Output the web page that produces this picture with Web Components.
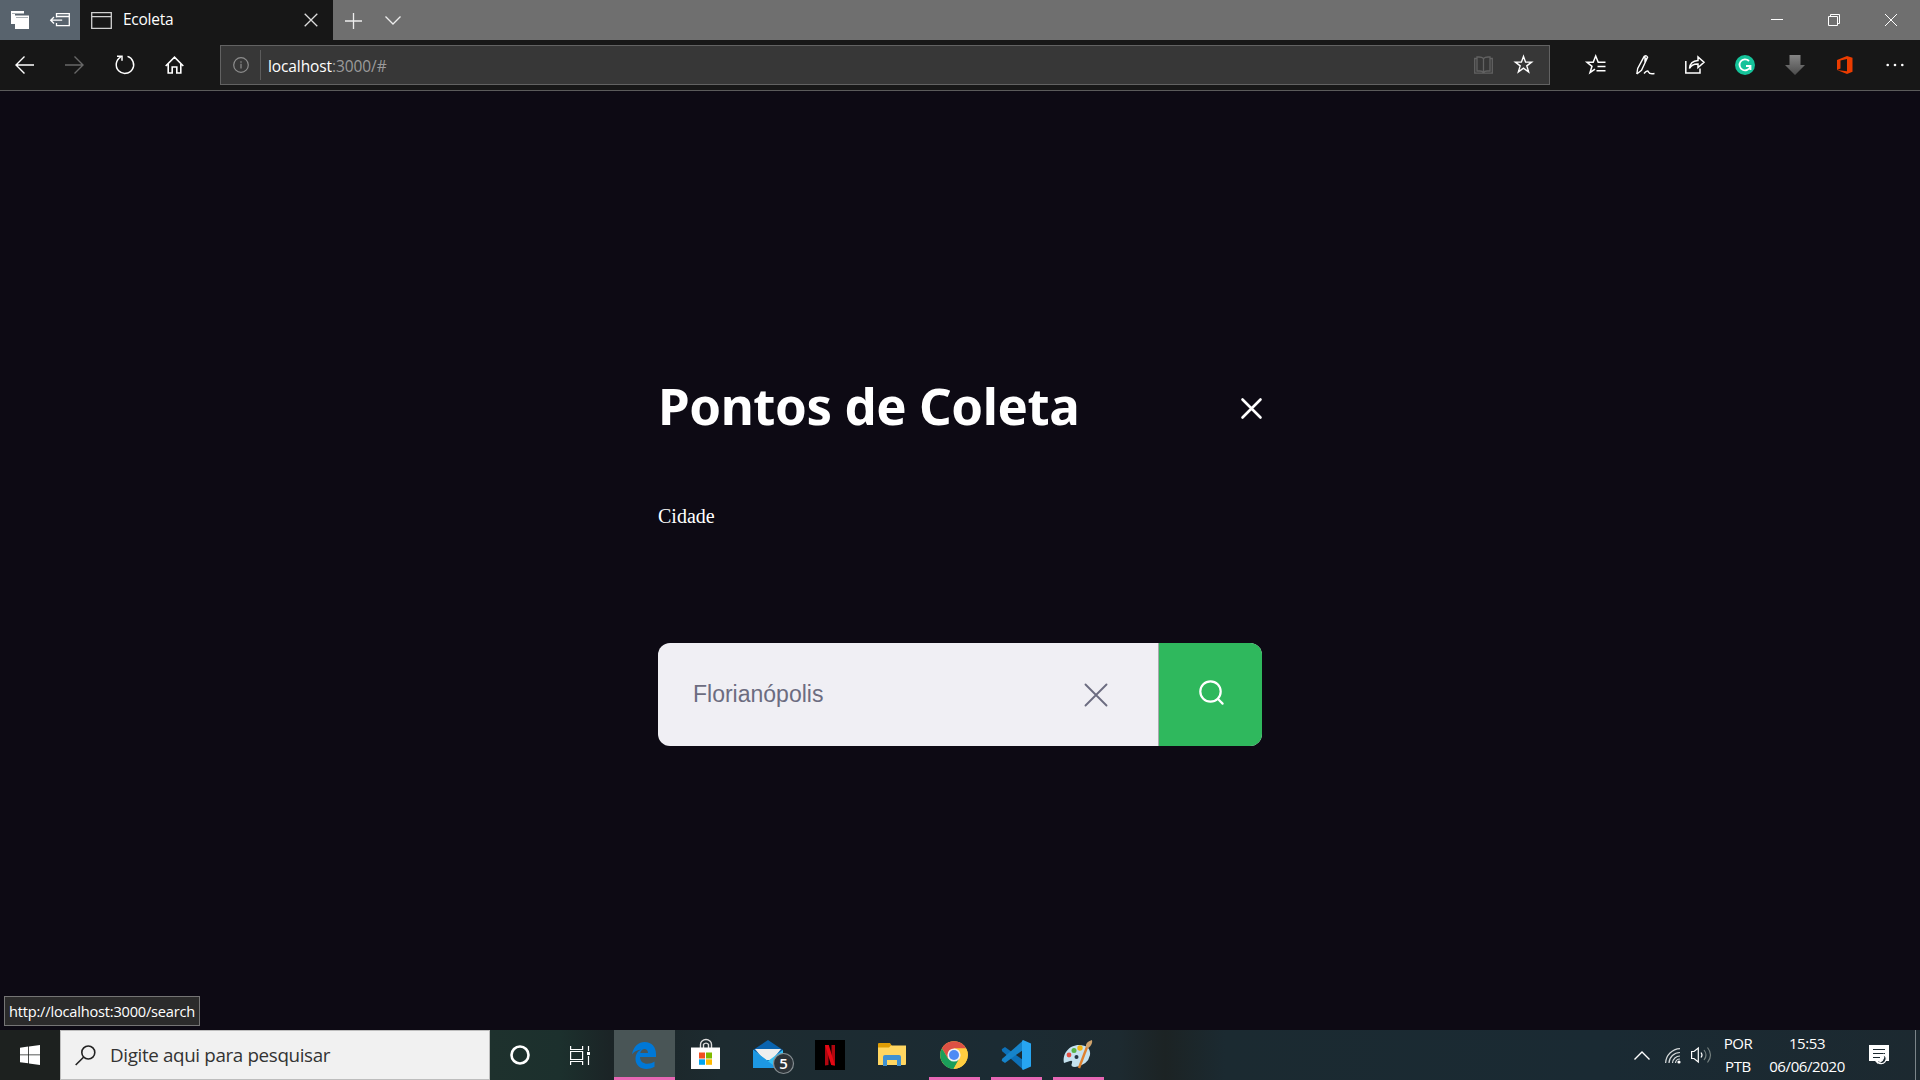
<!DOCTYPE html>
<html lang="pt-BR">
<head>
<meta charset="utf-8">
<title>Ecoleta</title>
<style>
html,body{margin:0;height:100%;background:#0d0a14;overflow:hidden}
</style>
</head>
<body>
<eco-desktop></eco-desktop>
<script>
const define = (name, css, html) => customElements.define(name, class extends HTMLElement {
  constructor() {
    super();
    this.attachShadow({mode: 'open'}).innerHTML = `<style>*{box-sizing:border-box}svg{display:block;overflow:visible}${css}</style>${html}`;
  }
});

/* fixed-width cell that centres an icon */
customElements.define('icon-cell', class extends HTMLElement {
  constructor() {
    super();
    this.attachShadow({mode: 'open'}).innerHTML = `<style>:host{display:flex;align-items:center;justify-content:center;flex:none;height:100%;width:var(--w,50px)}</style><slot></slot>`;
  }
  connectedCallback() {
    if (this.hasAttribute('w')) this.style.setProperty('--w', this.getAttribute('w') + 'px');
  }
});

define('tab-strip', `
:host{display:flex;height:40px;background:#6f6f6f;color:#fff;font:16px "Open Sans",sans-serif}
.aside{display:flex;width:80px;background:#58636d}
.tab{display:flex;align-items:center;width:253px;background:#171717}
.tab svg:first-child{margin-left:11px}
.tab span{margin-left:11px;flex:1;letter-spacing:-.25px;font-size:15.5px;line-height:39px;height:40px}
.tab svg:last-child{margin-right:15px}
.gap{flex:1}
`, `
<div class="aside">
 <icon-cell w="40"><svg width="18" height="18" viewBox="0 0 18 18"><path d="M0 0h13v3H3v10H0z" fill="#fff"/><path d="M0 3h4v10H0z" fill="#fff"/><path d="M4 4.500h14V18H4z" fill="#fff"/><path d="M1 2.500h12M5 6.500h12" stroke="#a9b0b5"/></svg></icon-cell>
 <icon-cell w="40"><svg width="20" height="14" viewBox="0 0 20 14" fill="none" stroke="#fff" stroke-width="1.300"><path d="M6.500 4.500V.7h12.800v12H6.500V10M6.500 3.500h13M.7 7.200h11.500M4 4L.7 7.200 4 10.500"/></svg></icon-cell>
</div>
<div class="tab">
 <svg width="21" height="17" viewBox="0 0 21 17" fill="none" stroke="#d0d0d0" stroke-width="1.300"><path d="M.7.700h19.600v15.600H.7zM.7 4.600h19.600"/></svg>
 <span>Ecoleta</span>
 <svg width="14" height="14" viewBox="0 0 14 14" stroke="#ddd" stroke-width="1.300"><path d="M.7.700l12.600 12.600M13.300.700L.7 13.300"/></svg>
</div>
<icon-cell w="41"><svg width="17" height="17" viewBox="0 0 17 17" stroke="#eee" stroke-width="1.300"><path d="M8.500 1v16M0 9h17"/></svg></icon-cell>
<icon-cell w="37"><svg width="16" height="9" viewBox="0 0 16 9" fill="none" stroke="#eee" stroke-width="1.300"><path d="M.5.500L8 8 15.500.500"/></svg></icon-cell>
<div class="gap"></div>
<icon-cell w="57"><svg width="12" height="2"><path d="M0 .500h12" stroke="#fff"/></svg></icon-cell>
<icon-cell w="57"><svg width="12" height="12" viewBox="0 0 12 12" fill="none" stroke="#fff"><path d="M.5 2.500h9v9h-9zM2.500 2.500v-2h9v9h-2"/></svg></icon-cell>
<icon-cell w="57"><svg width="12" height="12" viewBox="0 0 12 12" stroke="#fff"><path d="M0 0l12 12M12 0L0 12"/></svg></icon-cell>
<icon-cell w="1"></icon-cell>
`);

define('address-bar', `
:host{display:flex;align-items:center;width:1330px;height:40px;border:1px solid #626262;background:#373737;font:16px "Open Sans",sans-serif;color:#9b9b9b}
b{font-weight:400;color:#fff}
.rule{width:1px;height:30px;background:#5c5c5c}
span{flex:1;margin-left:7px;padding-top:2px;font-size:15.500px;letter-spacing:-.1px}
`, `
<icon-cell w="39"><svg width="16" height="16" viewBox="0 0 16 16" fill="none" stroke="#8d8d8d" stroke-width="1.200"><circle cx="8" cy="8" r="7.300"/><path d="M8 6.800v4.700M8 4.300v1.400"/></svg></icon-cell>
<div class="rule"></div><span><b>localhost</b>:3000/#</span>
<icon-cell w="40"><svg width="19" height="18" viewBox="0 0 19 18" fill="none" stroke="#626262" stroke-width="1.300"><path d="M9.500 2.500Q8 1 5 1H3v14h3q2.500 0 3.500 1.500Q10.500 15 13 15h3V1h-2q-3 0-4.500 1.500zV16M3 2.500H.7v14.700h17.600V2.500H16"/></svg></icon-cell>
<icon-cell w="40"><svg width="19" height="19" viewBox="0 0 20 20" fill="none" stroke="#fff" stroke-width="1.500"><path d="M10 1.500l2.200 6h6.300l-5 3.900 1.900 6.400-5.400-3.900-5.400 3.900 1.900-6.400-5-3.900h6.300z"/></svg></icon-cell>
<icon-cell w="6"></icon-cell>
`);

define('nav-bar', `
:host{display:flex;align-items:center;height:51px;padding-bottom:1px;background:#171717;border-bottom:1px solid #5b5b5b}
address-bar{margin-left:21px}
.tools{display:flex;height:100%;margin-left:20px}
`, `
<icon-cell w="49"><svg width="19" height="18" viewBox="0 0 19 18" fill="none" stroke="#fff" stroke-width="1.400"><path d="M19 9H1M9.500.500L1 9l8.500 8.500"/></svg></icon-cell>
<icon-cell w="50"><svg width="19" height="18" viewBox="0 0 19 18" fill="none" stroke="#686868" stroke-width="1.400"><path d="M0 9h18M9.500.500L18 9l-8.500 8.500"/></svg></icon-cell>
<icon-cell w="51"><svg width="19" height="19" viewBox="0 0 19 19" fill="none" stroke="#fff" stroke-width="1.500"><path d="M12.500 1.400A8.700 8.700 0 1 1 5.700 2.100M2 1.300h5v4.500"/></svg></icon-cell>
<icon-cell w="49"><svg width="19" height="18" viewBox="0 0 19 18" fill="none" stroke="#fff" stroke-width="1.600"><path d="M.7 10L9.500 1.200l8.800 8.800M3.200 8v9h4v-6h4.600v6h4V8"/></svg></icon-cell>
<address-bar></address-bar>
<div class="tools">
<icon-cell w="51"><svg width="20" height="19" viewBox="0 0 20 19" fill="none" stroke="#fff" stroke-width="1.500"><path d="M19.500 7.300h-7.300L9.700 1 7.200 7.300H1l5 4-2 6.300 5-3.500M11.500 11.500h8M10.500 15.700h9"/></svg></icon-cell>
<icon-cell w="49"><svg width="19" height="20" viewBox="0 0 19 20" fill="none" stroke="#fff" stroke-width="1.400"><path d="M.8 19l.9-5.500L8.200 1.300q2.500-1.500 3.400 1L5.500 15.200.8 19M9 1v5l2-3M8 18.500q3.500-4 4.500-1.500t6 1.500"/></svg></icon-cell>
<icon-cell w="50"><svg width="20" height="18" viewBox="0 0 20 18" fill="none" stroke="#fff" stroke-width="1.500"><path d="M.8 5v12H15v-4.500M4.500 12.500q.5-7.500 8.500-8V1l6 5.300-6 5.200V8q-6-.3-8.500 4.500z"/></svg></icon-cell>
<icon-cell w="50"><svg width="20" height="20" viewBox="0 0 20 20"><circle cx="10" cy="10" r="10" fill="#15c39a"/><path d="M14 6a5.500 5.500 0 1 0 1.300 5.500M11 11h4.500v4" fill="none" stroke="#fff" stroke-width="1.800"/></svg></icon-cell>
<icon-cell w="50"><svg width="20" height="20" viewBox="0 0 20 20"><defs><linearGradient id="g" x2="0" y2="1"><stop stop-color="#858585"/><stop offset="1" stop-color="#4c4c4c"/></linearGradient></defs><path d="M4.500 0h11v10H20L10 20 0 10h4.500z" fill="url(#g)"/></svg></icon-cell>
<icon-cell w="50"><svg width="16" height="18" viewBox="0 0 16 18"><path d="M0 4L10 0l5.500 1.800v14L10 18 0 14l10 1.300V3L3.500 4.600v8L0 14z" fill="#eb3c00"/></svg></icon-cell>
<icon-cell w="50"><svg width="18" height="4" viewBox="0 0 18 4" fill="#fff"><circle cx="1.700" cy="2" r="1.300"/><circle cx="9" cy="2" r="1.300"/><circle cx="16.300" cy="2" r="1.300"/></svg></icon-cell>
</div>
`);

define('page-title', `
:host{display:flex;justify-content:space-between;align-items:center;height:64px}
h1{margin:-6px 0 0;font:bold 51px/64px "Noto Sans",sans-serif;color:#fff;letter-spacing:-.45px;white-space:nowrap}
`, `<h1><slot></slot></h1><svg width="21" height="21" viewBox="0 0 21 21" stroke="#fff" stroke-width="2.600" stroke-linecap="round"><path d="M1.500 1.500l18 18M19.500 1.500l-18 18"/></svg>`);

define('search-box', `
:host{display:flex;height:103px;border-radius:12px;overflow:hidden;background:#f0eff4}
.field{display:flex;align-items:center;flex:1;padding:0 51px 0 35px;border-right:1px solid #a9a9ad;font:23px "Liberation Sans",Arial,sans-serif;color:#6c6c80}
.field span{flex:1}
.go{display:flex;align-items:center;justify-content:center;width:103px;background:#2fb85d;padding-bottom:5px}
`, `<div class="field"><span><slot></slot></span><svg width="22" height="22" viewBox="0 0 22 22" stroke="#6c6c80" stroke-width="1.900" stroke-linecap="round"><path d="M.5.500l21 21M21.500.500l-21 21"/></svg></div>
<div class="go"><svg width="26" height="26" viewBox="0 0 26 26" fill="none" stroke="#fff" stroke-width="2.200" stroke-linecap="round"><circle cx="12.500" cy="12.500" r="10.200"/><path d="M20 20l4.600 4.600"/></svg></div>`);

define('eco-page', `
:host{display:flex;flex-direction:column;flex:1;align-items:center;background:#0d0a14;position:relative}
main{display:flex;flex-direction:column;width:604px;padding-top:285px}
label{margin-top:64px;font:20px/24px "Liberation Serif","Times New Roman",serif;color:#fff}
search-box{margin-top:115px}
.status{position:absolute;left:4px;bottom:4px;width:196px;height:30px;padding-left:4px;border:1px solid #757575;background:#2b2b2b;color:#fff;font:14.600px/29px "Open Sans",sans-serif;white-space:nowrap;letter-spacing:-.2px}
`, `<main><page-title>Pontos de Coleta</page-title><label>Cidade</label><search-box>Florianópolis</search-box></main>
<div class="status">http://localhost:3000/search</div>`);

customElements.define('task-button', class extends HTMLElement {
  constructor() {
    super();
    this.attachShadow({mode: 'open'}).innerHTML = `<style>
:host{display:flex;position:relative;align-items:center;justify-content:center;flex:none;width:62px;height:50px}
:host([running])::after{content:"";position:absolute;left:6px;right:5px;bottom:0;height:3px;background:#e667b4}
:host([active]){background:#495556}
:host([active])::after{left:0;right:0}
</style><slot></slot>`;
  }
});

define('task-bar', `
:host{display:flex;height:50px;background:linear-gradient(90deg,#1d211f 0,#1d211f 60px,#1e312d 490px,#1c302d 560px,#1b2426 610px,#1d2b30 720px,#1b2b33 1000px,#1d2a30 1120px,#1c2324 1165px,#1b2a31 1225px,#1a2a33 1600px,#1c2930 1920px);color:#fff;font:15px "Open Sans",sans-serif}
.find{display:flex;align-items:center;width:430px;height:50px;border:1px solid #bdbdbd;background:#f1f1f1;color:#333;padding-left:14px;font-size:18.800px}
.find span{margin-left:14px;letter-spacing:-.35px}
.gap{flex:1}
.col{display:flex;flex-direction:column;align-items:center;justify-content:center;line-height:22.500px;letter-spacing:-.4px;font-size:15px;padding-bottom:1px}
.end{width:5px;border-left:1px solid #7b8589;margin-left:8px}
`, `
<icon-cell w="60"><svg width="20" height="20" viewBox="0 0 20 20" fill="#fff"><path d="M0 2.800L8.200 1.600v7.900H0zM9 1.500L20 0v9.500H9zM0 10.300h8.200v8L0 17.200zM9 10.300h11V20L9 18.400z"/></svg></icon-cell>
<div class="find"><svg width="21" height="21" viewBox="0 0 21 21" fill="none" stroke="#222" stroke-width="1.600"><circle cx="13.300" cy="7.500" r="6.500"/><path d="M8.500 12.300L.7 20"/></svg><span>Digite aqui para pesquisar</span></div>
<icon-cell w="60"><svg width="20" height="20" viewBox="0 0 20 20" fill="none" stroke="#fff" stroke-width="2.600"><circle cx="10" cy="10" r="8.500"/></svg></icon-cell>
<icon-cell w="64"><svg style="margin-left:-4px" width="20" height="19" viewBox="0 0 20 19" fill="none" stroke="#fff" stroke-width="1.200"><path d="M.6 0v3.500h12V0M.6 5.500h12v8H.6zM.6 19v-3.500h12V19M18.500 0v5M18.500 10v9"/><path d="M17 6h3v3h-3z" fill="#fff" stroke="none"/></svg></icon-cell>
<task-button style="width:61px" active running><svg style="margin:1px 2px 0 0" width="24" height="27" viewBox="0 0 24 27"><path d="M0 12.500C1.500 4 7 0 12.500 0 20 0 24 5.500 24 12v3H8c.2 8 9.500 8 14.500 4.500v5.300C13 30 3.500 25.500 3.500 17c0-5 2.500-8 5.500-9.500C4.500 8 1.500 10 0 12.500zM8.200 11H16c0-5.300-6.500-5.500-7.800 0z" fill="#0078d7"/></svg></task-button>
<task-button><svg style="margin:0 2px 0 0" width="29" height="30" viewBox="0 0 29 30"><path d="M9.500 8V4.500a5 4.500 0 0 1 11 0V8M12.500 8V4.500a3 3 0 0 1 5 0V8" fill="none" stroke="#ddd" stroke-width="1.400"/><path d="M0 7.500h29V29H0z" fill="#fff"/><path d="M8 12.500h6v6H8z" fill="#f25022"/><path d="M15 12.500h6v6h-6z" fill="#7fba00"/><path d="M8 19.300h6v5.500H8z" fill="#00a4ef"/><path d="M15 19.300h6v5.500h-6z" fill="#ffb900"/></svg></task-button>
<task-button><svg width="42" height="34" viewBox="0 0 42 34" style="margin:4px 0 0 11px"><path d="M0 10L15 0l15 10v18H0z" fill="#0a63ae"/><path d="M2 9h26l-9 11h-8z" fill="#eee"/><path d="M0 10l15 11 15-11v18H0z" fill="#35c0f2"/><path d="M0 10l24 18H0z" fill="#1d98e3"/><circle cx="30.500" cy="23.500" r="10" fill="#2c3338" stroke="#858d91" stroke-width="1.200"/><text x="30.500" y="29" text-anchor="middle" fill="#fff" font-family="Open Sans" font-weight="600" font-size="15">5</text></svg></task-button>
<task-button><svg width="30" height="30" viewBox="0 0 30 30"><path d="M0 0h30v30H0z"/><path d="M10 5h3.500v20l-3.500.500zM16.500 5H20v20.500l-3.500-.500z" fill="#b1060f"/><path d="M10 5h3.800L20 25.500l-3.800-.400z" fill="#e50914"/></svg></task-button>
<task-button><svg width="28" height="24" viewBox="0 0 28 24" style="margin-top:-1px"><path d="M0 1q0-1 1-1h11l2 3-2 3H0z" fill="#dd9c05"/><path d="M0 4.500h11l2-2h15V21q0 1-1 1H0z" fill="#ffd661"/><path d="M5 23v-9q0-2 2-2h14q2 0 2 2v9h-4v-6H9v6z" fill="#3f91d2"/></svg></task-button>
<task-button running><svg width="28" height="28" viewBox="0 0 28 28"><circle cx="14" cy="14" r="13.800" fill="#ffcd40"/><path d="M1.900 7.300A14 14 0 0 1 26.200 7.500H14L8 17.500z" fill="#dd5144"/><path d="M1.900 7.300A14 14 0 0 0 13.500 28l6-11H14L8 17.500z" fill="#1b9e5a"/><path d="M14 7.500h12.200Q30 14 25.500 21.500 21 28 13.500 28l6-10z" fill="#ffcd40"/><circle cx="14" cy="14" r="6.600" fill="#f1f1f1"/><circle cx="14" cy="14" r="5" fill="#4c8bf5"/></svg></task-button>
<task-button running><svg width="30" height="30" viewBox="0 0 30 30"><path d="M1 9l3-2 18 13v9.500L1.500 11.500Q.300 10 1 9z" fill="#0d70b8"/><path d="M1 21l3 2 18-13V.500L1.500 18.500Q.300 20 1 21z" fill="#1684cb"/><path d="M22 0l8 3.500v23L22 30q-1-.500-1-2V2q0-1.500 1-2z" fill="#27a5f1"/></svg></task-button>
<task-button running><svg width="30" height="29" viewBox="0 0 30 29" style="margin-top:-1px"><path d="M1 23C-1 14 6 5 16 5q12 0 11 10-2 10-15 12-5 0-3-4 1-3-2-2t-6 2z" fill="#c5e2ef"/><circle cx="6" cy="15" r="2.400" fill="#e34f43"/><circle cx="11" cy="10.500" r="2.500" fill="#59b447"/><circle cx="17" cy="8" r="2.700" fill="#f2b614"/><circle cx="13.500" cy="17" r="2" fill="#243644"/><path d="M16 28L24 7" stroke="#df812f" stroke-width="2.400"/><path d="M23 7q-1-5 6-7 1 4-3.500 8z" fill="#cfa36c"/></svg></task-button>
<div class="gap"></div>
<icon-cell w="34"><svg width="16" height="9" viewBox="0 0 16 9" fill="none" stroke="#fff" stroke-width="1.400"><path d="M.5 8.500L8 1l7.500 7.500"/></svg></icon-cell>
<icon-cell w="28"><svg style="margin-top:2px" width="16" height="16" viewBox="0 0 16 16" fill="none" stroke="#d5d9da" stroke-width="1.200"><path d="M.6 15A15 15 0 0 1 15 .6M4 15A11 11 0 0 1 15 4.500M7.500 15A7.500 7.500 0 0 1 15 8M10.500 15a4.500 4.500 0 0 1 4.500-4"/><circle cx="14" cy="14" r="1.600" fill="#fff" stroke="none"/></svg></icon-cell>
<icon-cell w="28"><svg width="21" height="18" viewBox="0 0 21 18" fill="none" stroke="#fff" stroke-width="1.200"><path d="M.6 5.500H3L7.300 2v14L3 12.500H.6zM10 6.500q2 2.500 0 5"/><path d="M13 4q4 5 0 10M16.500 1.500q6 7.500 0 15" stroke="#75807f"/></svg></icon-cell>
<div class="col" style="width:54px;margin-left:-4px"><span>POR</span><span>PTB</span></div>
<div class="col" style="width:84px"><span>15:53</span><span>06/06/2020</span></div>
<icon-cell w="58"><svg width="21" height="20" viewBox="0 0 21 20" style="margin-left:2px"><path d="M0 0h20v16H9v3l-3-3H0z" fill="#fff"/><path d="M4 4.500h12M4 8.500h12M4 12.500h7" stroke="#1c2930" stroke-width="1.200"/><path d="M15 9.500a5 5 0 1 1-6.500 7.500q6.500.500 6.500-7.500z" fill="#1c2930" stroke="#fff" stroke-width="1.200"/></svg></icon-cell>
<div class="end"></div>
`);

define('eco-desktop', `:host{display:flex;flex-direction:column;width:1920px;height:1080px;overflow:hidden}tab-strip,nav-bar,task-bar{flex:none}`,
`<tab-strip></tab-strip><nav-bar></nav-bar><eco-page></eco-page><task-bar></task-bar>`);
</script>
</body>
</html>
